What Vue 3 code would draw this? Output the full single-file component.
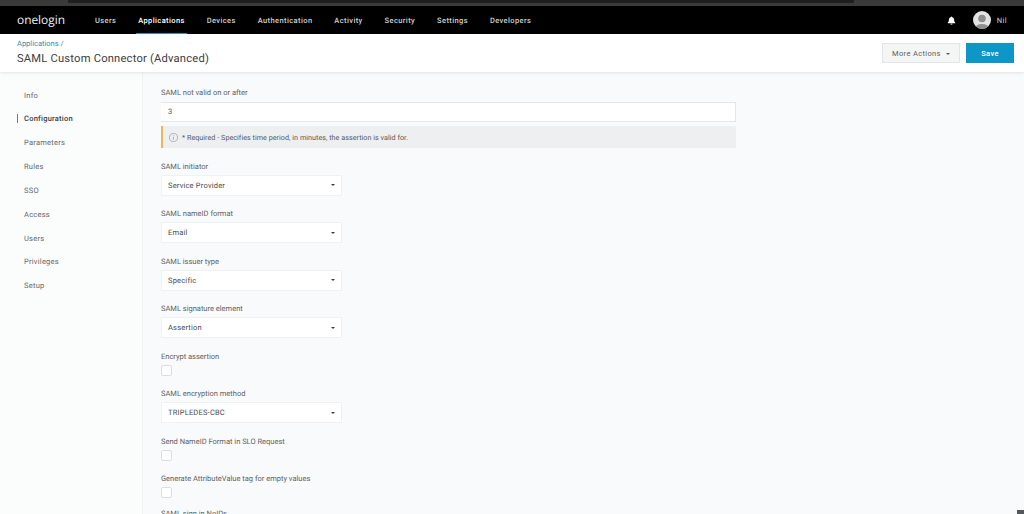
<template>
    <div class="page">
        <div class="chrome-strip"><div class="chrome-tab"></div></div>
        <header class="topnav">
            <div class="logo">onelogin</div>
            <nav class="nav-links">
                <a
                    v-for="link in navLinks"
                    :key="link"
                    class="nav-link"
                    :class="{ active: link === 'Applications' }"
                >{{ link }}</a>
            </nav>
            <div class="nav-right">
                <svg class="bell" viewBox="0 0 12 12" width="9" height="9">
                    <path d="M6 .6c.5 0 .9.4.9.9 1.7.4 2.600 1.800 2.600 3.500 0 2 .5 3 1.400 3.800v.7H1.100v-.7C2 8 2.500 7 2.500 5c0-1.700.9-3.100 2.600-3.500 0-.5.4-.9.9-.9zM4.600 10.400h2.800c0 .8-.6 1.200-1.400 1.200s-1.400-.4-1.400-1.200z" fill="#fff" />
                </svg>
                <svg class="avatar" viewBox="0 0 18 18" width="18" height="18">
                    <defs>
                        <clipPath id="avatar-clip"><circle cx="9" cy="9" r="9" /></clipPath>
                    </defs>
                    <circle cx="9" cy="9" r="9" fill="#e4e4e4" />
                    <g clip-path="url(#avatar-clip)">
                        <circle cx="9" cy="7.500" r="3.800" fill="#8f8f8f" />
                        <ellipse cx="9" cy="17.500" rx="7" ry="4.500" fill="#8f8f8f" />
                    </g>
                </svg>
                <span class="user-name">Nil</span>
            </div>
        </header>

        <div class="subheader">
            <div class="titles">
                <a class="crumb">Applications /</a>
                <h1>SAML Custom Connector (Advanced)</h1>
            </div>
            <div class="actions">
                <button class="btn-more">More Actions <span class="caret"></span></button>
                <button class="btn-save">Save</button>
            </div>
        </div>

        <div class="body">
            <aside class="sidebar">
                <a
                    v-for="item in sideItems"
                    :key="item"
                    class="side-item"
                    :class="{ current: item === 'Configuration' }"
                >{{ item }}</a>
            </aside>
            <main class="content">
                <div class="prev-alert"></div>

                <div class="field first">
                    <label>SAML not valid on or after</label>
                    <div class="text-input">3</div>
                    <div class="alert">
                        <svg viewBox="0 0 12 12" width="9" height="9">
                            <circle cx="6" cy="6" r="5.400" fill="none" stroke="#8c8f92" stroke-width=".8" />
                            <path d="M6 5.200v3.600M6 3.200v1" stroke="#8c8f92" stroke-width=".9" />
                        </svg>
                        <span>* Required - Specifies time period, in minutes, the assertion is valid for.</span>
                    </div>
                </div>

                <div v-for="field in fields" :key="field.label" class="field spaced">
                    <label>{{ field.label }}</label>
                    <div v-if="field.value" class="select">
                        <span>{{ field.value }}</span>
                        <span class="caret dark"></span>
                    </div>
                    <div v-else class="checkbox"></div>
                </div>

                <div class="field cut">
                    <label>SAML sign in NoIDs</label>
                </div>
            </main>
        </div>
        <div class="corner"></div>
    </div>
</template>

<script setup>
const navLinks = ['Users', 'Applications', 'Devices', 'Authentication', 'Activity', 'Security', 'Settings', 'Developers']
const sideItems = ['Info', 'Configuration', 'Parameters', 'Rules', 'SSO', 'Access', 'Users', 'Privileges', 'Setup']
const fields = [
    { label: 'SAML initiator', value: 'Service Provider' },
    { label: 'SAML nameID format', value: 'Email' },
    { label: 'SAML issuer type', value: 'Specific' },
    { label: 'SAML signature element', value: 'Assertion' },
    { label: 'Encrypt assertion' },
    { label: 'SAML encryption method', value: 'TRIPLEDES-CBC' },
    { label: 'Send NameID Format in SLO Request' },
    { label: 'Generate AttributeValue tag for empty values' }
]
</script>

<style>
html, body {
    margin: 0;
    height: 100%;
    overflow: hidden;
    background: #f9fafb;
}
</style>

<style scoped>
.page {
    position: relative;
    width: 1024px;
    height: 514px;
    overflow: hidden;
    display: flex;
    flex-direction: column;
    font-family: Roboto, "Liberation Sans", sans-serif;
    text-rendering: geometricPrecision;
    color: #4a4d50;
}

.chrome-strip {
    height: 6px;
    background: #3a3a3a;
    flex: none;
}

.chrome-tab {
    height: 3px;
    margin: 0 170px 0 68px;
    background: #1f1f1f;
}

.topnav {
    height: 28px;
    flex: none;
    background: #000;
    display: flex;
    align-items: center;
    padding-left: 17px;
    color: #d6d6d6;
}

.logo {
    width: 78px;
    font-family: "Open Sans", "Liberation Sans", sans-serif;
    font-size: 11.900px;
    color: #f2f2f2;
}

.nav-links {
    display: flex;
    height: 100%;
    gap: 21.900px;
}

.nav-link {
    font-size: 7.500px;
    font-weight: 500;
    letter-spacing: .4px;
    line-height: 29px;
    box-sizing: border-box;
    height: 28px;
    color: #cfcfcf;
}

.nav-link.active {
    color: #fff;
    border-bottom: 1px solid #1a9cc9;
    box-shadow: 0 1px 0 #1a9cc9;
    padding: 0 2.500px;
    margin: 0 -2.500px;
}

.nav-right {
    margin-left: auto;
    display: flex;
    align-items: center;
    padding-right: 17px;
}

.bell {
    margin-right: 17px;
}

.user-name {
    margin-left: 6px;
    font-size: 7.500px;
    letter-spacing: .4px;
}

.subheader {
    height: 38px;
    flex: none;
    background: #fff;
    display: flex;
    justify-content: space-between;
    align-items: center;
    padding: 0 10px 0 17px;
    box-shadow: 0 1px 3px rgba(0, 0, 0, .1);
    position: relative;
    z-index: 2;
}

.crumb {
    display: block;
    font-size: 7.500px;
    color: #2f8fb0;
    line-height: 10px;
    margin-bottom: 2px;
}

h1 {
    margin: 0;
    font-size: 11.200px;
    font-weight: 400;
    line-height: 16px;
    letter-spacing: .2px;
    color: #3d4043;
}

.actions {
    display: flex;
    gap: 6px;
}

.actions button {
    font-family: inherit;
    height: 20px;
    padding: 0;
    font-size: 7.500px;
    letter-spacing: .35px;
}

.btn-more {
    width: 78px;
    background: #f4f5f5;
    border: 1px solid #e3e4e5;
    color: #5c5f62;
}

.btn-save {
    width: 48px;
    background: #0d96c6;
    border: 0;
    color: #fff;
    font-weight: 500;
}

.caret {
    display: inline-block;
    margin-left: 3px;
    vertical-align: middle;
    border-left: 2.500px solid transparent;
    border-right: 2.500px solid transparent;
    border-top: 2.500px solid #55585b;
}

.caret.dark {
    border-top-color: #3a3d40;
}

.body {
    flex: 1;
    display: flex;
    min-height: 0;
}

.sidebar {
    width: 143px;
    flex: none;
    background: #fbfcfc;
    border-right: 1px solid #f1f2f3;
    padding-top: 11.500px;
    box-sizing: border-box;
}

.side-item {
    display: block;
    height: 23.850px;
    line-height: 23.850px;
    padding-left: 24px;
    font-size: 7.500px;
    letter-spacing: .25px;
    color: #66696c;
    position: relative;
}

.side-item.current {
    color: #3d4043;
    font-weight: 500;
}

.side-item.current::before {
    content: "";
    position: absolute;
    left: 17px;
    top: 7px;
    height: 9px;
    width: 1px;
    background: #1a9cc9;
}

.content {
    flex: 1;
    padding-left: 18px;
    min-width: 0;
    position: relative;
}

.prev-alert {
    position: absolute;
    left: 18px;
    top: -3px;
    width: 1px;
    height: 3px;
    background: #efa83c;
}

.field {
    width: 575px;
}

.field.first {
    padding-top: 16px;
}

label {
    display: block;
    font-size: 7.500px;
    line-height: 9px;
    letter-spacing: 0;
    color: #5f6265;
}

.text-input {
    box-sizing: border-box;
    height: 20px;
    margin-top: 5px;
    background: #fff;
    border: 1px solid #e4e6e8;
    border-left: 0;
    padding-left: 7px;
    font-size: 7.500px;
    line-height: 18px;
    color: #55585b;
}

.alert {
    box-sizing: border-box;
    height: 22px;
    margin-top: 4px;
    background: #eeeff1;
    border-left: 2px solid #f0b45c;
    display: flex;
    align-items: center;
    gap: 4px;
    padding-left: 6px;
    font-size: 7.200px;
    letter-spacing: .03px;
    color: #55585b;
}

.spaced {
    margin-top: 13.500px;
}

.select {
    box-sizing: border-box;
    width: 181px;
    height: 21px;
    margin-top: 4px;
    background: #fff;
    border: 1px solid #f0f1f2;
    display: flex;
    align-items: center;
    justify-content: space-between;
    padding: 0 6px;
    font-size: 7.500px;
    letter-spacing: .2px;
    color: #4a4d50;
}

.checkbox {
    box-sizing: border-box;
    width: 11px;
    height: 11px;
    margin-top: 4px;
    background: #fff;
    border: 1px solid #dcdee0;
    border-radius: 2px;
}

.cut {
    margin-top: 11px;
}

.corner {
    position: absolute;
    right: 0;
    bottom: 0;
    width: 7px;
    height: 4px;
    background: #55585b;
}
</style>
